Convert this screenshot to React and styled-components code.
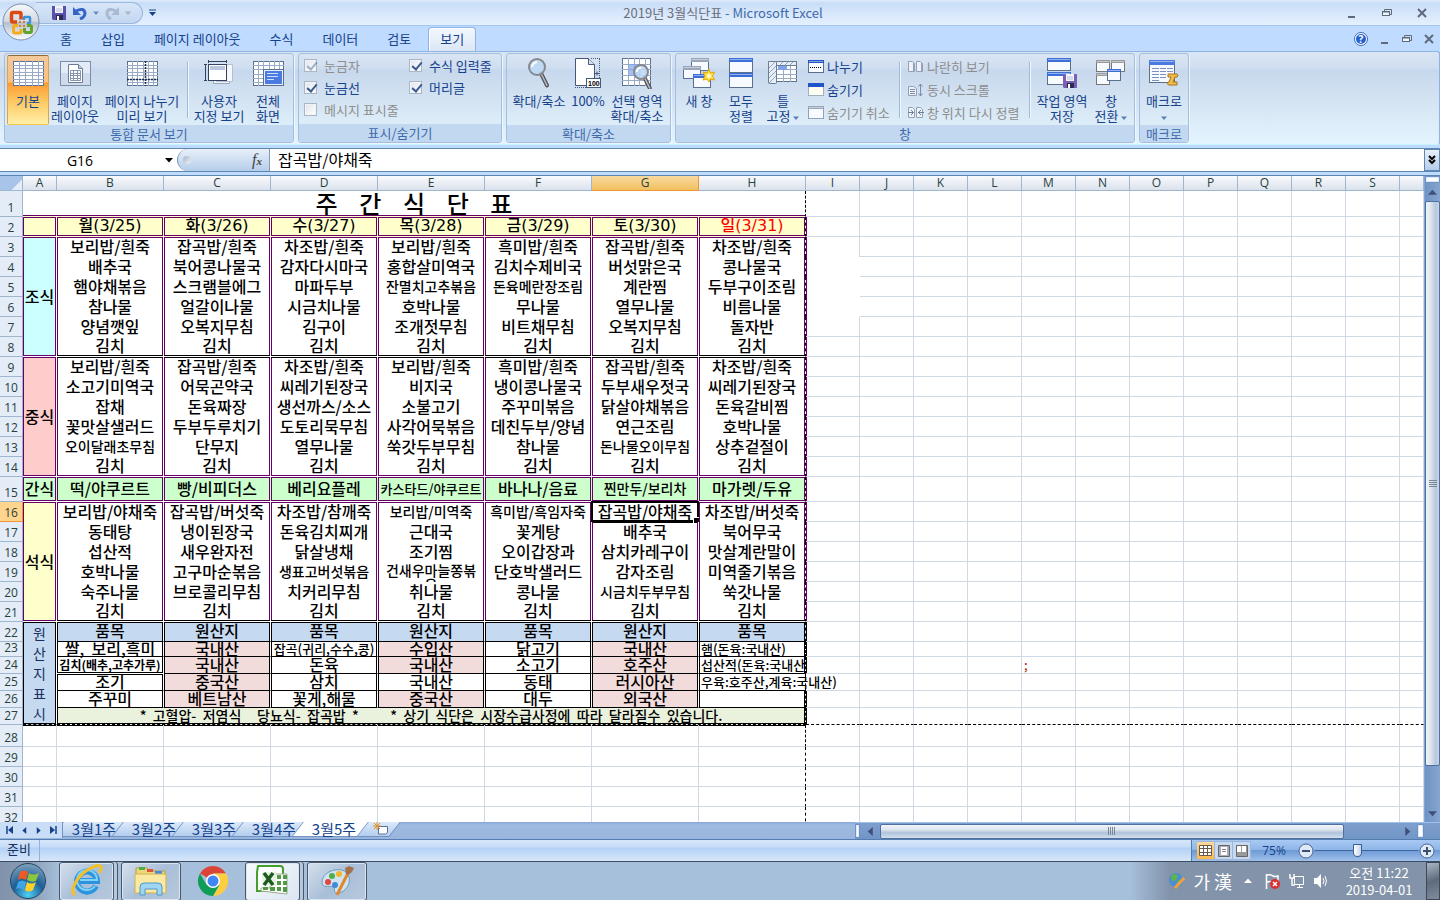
import { useState, } from 'react';
import styled, { createGlobalStyle, css, } from 'styled-components';

const GlobalStyle = createGlobalStyle`
  * { box-sizing: border-box; }
  body {
    margin: 0;
    overflow: hidden;
    color: #15428b;
    font-size: 13px;
    line-height: 15px;
    font-family: "Noto Sans CJK KR", sans-serif;
  }
  button, input {
    margin: 0;
    padding: 0;
    border: 0;
    color: inherit;
    font: inherit;
    background: none;
  }
`;

const PURPLE = '#660066';
const BLACK = '#000';
const GRID = '#d0d7e5';

const Window = styled.div`
  display: flex;
  flex-direction: column;
  height: 100vh;
  position: relative;
  background: #bfdbff;
`;

/* title bar */

const TitleBar = styled.header`
  display: flex;
  align-items: center;
  height: 26px;
  padding-left: 36px;
  border-bottom: 1px solid #a5c7f3;
  background: linear-gradient(#dfecfb 0, #c9ddf6 3px, #d3e4fa 10px, #e4f0fe 100%);
`;

const QuickBar = styled.div`
  display: flex;
  align-items: center;
  gap: 4px;
  width: 107px;
  height: 22px;
  padding-left: 15px;
  border: 1px solid #9bb8de;
  border-left: 0;
  border-radius: 0 11px 11px 0;
  background: linear-gradient(#d8e6f8, #c3d7f0);
`;

const IconButton = styled.button`
  display: flex;
  align-items: center;
  justify-content: center;
  width: ${p => p.$w || 14}px;
  height: ${p => p.$h || 16}px;
`;

const Title = styled.h1`
  flex: 1;
  margin: 0;
  padding-right: 62px;
  color: #6a6f7c;
  font-size: 13px;
  font-weight: 400;
  text-align: center;
  span { color: #3e6aaa; }
`;

const WindowButtons = styled.div`
  display: flex;
  align-items: center;
  gap: ${p => p.$gap}px;
  padding-right: ${p => p.$pad}px;
`;

const OfficeButton = styled.button`
  position: absolute;
  left: 2px;
  top: 3px;
  width: 38px;
  height: 38px;
`;

/* ribbon */

const TabRow = styled.nav`
  display: flex;
  align-items: flex-end;
  gap: 5px;
  height: 25px;
  padding-left: 48px;
`;

const RibbonTab = styled.button`
  height: 24px;
  padding: 0 11px 2px;
  border: 1px solid transparent;
  border-bottom: 0;
  border-radius: 4px 4px 0 0;
  ${p => p.$active && css`
    border-color: #8db2e3;
    background: linear-gradient(#f3f8fe, #dbe6f5);
    box-shadow: inset 1px 1px #fff;
  `}
`;

const Spacer = styled.div`
  flex: 1;
`;

const RibbonBody = styled.section`
  display: flex;
  gap: 4px;
  height: 94px;
  margin-bottom: 3px;
  padding: 1px 4px 2px;
  border: 1px solid #8db2e3;
  border-left: 0;
  border-bottom: 1px solid #c3f5fb;
  border-radius: 0 3px 3px 0;
  background: linear-gradient(#dbe6f4 0, #cfdef0 16px, #c7d8ed 18px, #d9e8f5 60px, #e3f4ff 100%);
`;

const Group = styled.div`
  display: flex;
  flex-direction: column;
  flex: none;
  width: ${p => p.$w}px;
  height: 90px;
  border: 1px solid #a3bfdd;
  border-radius: 3px;
  overflow: hidden;
  box-shadow: 1px 1px #eef6fd;
`;

const GroupBody = styled.div`
  display: flex;
  flex: 1;
  padding: ${p => p.$pad || '0 2px'};
`;

const GroupLabel = styled.div`
  height: 18px;
  color: #3e6aaa;
  line-height: 17px;
  text-align: center;
  background: #c2d8f0;
`;

const BigButton = styled.button`
  display: flex;
  flex-direction: column;
  align-items: center;
  flex: none;
  width: ${p => p.$w}px;
  height: 70px;
  margin-top: 1px;
  padding-top: 1px;
  white-space: nowrap;
  border-radius: 2px;
  border: 1px solid transparent;
  ${p => p.$active && css`
    border-color: #8e6c3a #d9a44a #f2c64a;
    background: linear-gradient(#f3c99b 0, #fdc07c 26px, #fd9a33 27px, #fdc861 45px, #fff0a8 100%);
  `}
`;

const IconSlot = styled.span`
  display: flex;
  align-items: center;
  justify-content: center;
  height: 36px;
  padding-bottom: 4px;
`;

const Divider = styled.div`
  flex: none;
  width: 2px;
  height: 56px;
  margin: 8px 4px 0;
  border-left: 1px solid #9fbbdc;
  border-right: 1px solid #eff6fd;
`;

const CheckGrid = styled.div`
  display: grid;
  grid-template-columns: 105px 90px;
  grid-template-rows: repeat(3, 22px);
  grid-auto-flow: column;
`;

const CheckLabel = styled.label`
  display: flex;
  align-items: center;
  gap: 7px;
  white-space: nowrap;
  color: ${p => p.$off ? '#8d8d8d' : '#15428b'};
`;

const CheckBox = styled.input`
  appearance: none;
  width: 13px;
  height: 13px;
  border: 1px solid #a9b6c8;
  background: linear-gradient(135deg, #dfe5ee, #fff);
  box-shadow: inset 0 0 0 1px #f4f4f4;
  &:checked::after {
    content: '';
    display: block;
    width: 4px;
    height: 8px;
    margin: 0 0 0 4px;
    border: solid #3b5b92;
    border-width: 0 2px 2px 0;
    transform: rotate(40deg);
  }
  &:disabled::after { opacity: 0.45; }
`;

const SmallList = styled.div`
  display: flex;
  flex-direction: column;
  flex: none;
  width: ${p => p.$w}px;
  padding: 1px 0 0 3px;
`;

const SmallButton = styled.button`
  display: flex;
  align-items: center;
  gap: 3px;
  height: 23px;
  white-space: nowrap;
  color: ${p => p.disabled ? '#8d8d8d' : '#15428b'};
`;

/* formula bar */

const FormulaBar = styled.div`
  display: flex;
  height: 24px;
  margin-bottom: 3px;
  border-top: 1px solid #5d86b0;
  border-bottom: 1px solid #5d86b0;
  background: #fff;
  color: #000;
`;

const NameBox = styled.input`
  width: 160px;
  text-align: center;
  font: 14px "Open Sans", sans-serif;
`;

const FxArea = styled.div`
  display: flex;
  align-items: center;
  justify-content: space-between;
  width: 93px;
  padding: 0 7px 0 5px;
  border: 1px solid #7f9db9;
  border-width: 0 1px 0 1px;
  border-radius: 11px 0 0 11px;
  background: linear-gradient(#e9f0fa, #b5cdea);
  color: #444;
  font: italic 16px "Liberation Serif", serif;
  sub {
    font-size: 11px;
    font-weight: bold;
    vertical-align: baseline;
  }
`;

const Knob = styled.span`
  width: 8px;
  height: 8px;
  border-radius: 50%;
  background: linear-gradient(135deg, #a7b3c4, #eef3fa);
`;

const FormulaInput = styled.input`
  flex: 1;
  padding: 0 0 2px 8px;
  font-size: 16px;
`;

const ExpandButton = styled(IconButton)`
  width: 16px;
  height: 22px;
  border: 1px solid #5d86b0;
  background: linear-gradient(#e9f0fa, #b5cdea);
`;

/* sheet */

const SheetArea = styled.main`
  display: flex;
  flex: 1;
  min-height: 0;
  border-top: 1px solid #5d86b0;
`;

const SheetView = styled.div`
  flex: 1;
  overflow: hidden;
  background: #fff;
`;

const Sheet = styled.table`
  width: 100%;
  table-layout: fixed;
  border-spacing: 0;
  color: #000;
`;

const ColHead = styled.th`
  height: 15px;
  padding: 0;
  border-right: 1px solid #9eb6ce;
  border-bottom: 1px solid #9eb6ce;
  background: linear-gradient(#f8fafc, #dbe2ec);
  color: #27413e;
  font: 12px/14px "Open Sans", sans-serif;
  ${p => p.$active && css`
    border-color: #f29536;
    background: linear-gradient(#f9d99f, #f1c15f);
  `}
`;

const Corner = styled(ColHead)`
  background: linear-gradient(135deg, #a9c4e9 70%, #e4ecf7 70%);
`;

const RowHead = styled.th`
  padding: 0;
  vertical-align: bottom;
  border-right: 1px solid #9eb6ce;
  border-bottom: 1px solid #9eb6ce;
  background: #e4ecf7;
  color: #27413e;
  font: 12px/15px "Open Sans", sans-serif;
  ${p => p.$active && css`
    border-color: #f29536;
    background: #ffd58d;
  `}
`;

const RowSize = styled.div`
  display: flex;
  align-items: flex-end;
  justify-content: center;
  height: ${p => p.$h - 1}px;
  padding-bottom: 1px;
`;

function edges({ $side, $left = $side, $top, $bottom }) {
  const list = [
    $top && `inset 0 1px ${$top}`,
    $bottom && `inset 0 -1px ${$bottom}`,
    $left && `inset 1px 0 ${$left}`,
    $side && `inset -1px 0 ${$side}`,
  ].filter(Boolean);
  return list.length ? list.join(', ') : 'none';
}

const Cell = styled.td`
  position: relative;
  padding: 0;
  text-align: center;
  font-size: ${p => p.$size || 16}px;
  font-weight: ${p => p.$weight || 500};
  line-height: 17px;
  background: ${p => p.$bg || 'transparent'};
  border-right: 1px ${p => p.$right || `solid ${GRID}`};
  border-bottom: 1px ${p => p.$under || `solid ${GRID}`};
  box-shadow: ${edges};
`;

const CellText = styled.div`
  display: flex;
  align-items: center;
  justify-content: ${p => p.$start ? 'flex-start' : 'center'};
  height: ${p => p.$h - 1}px;
  padding: ${p => p.$start ? '0 2px 2px' : '0 0 2px'};
  white-space: pre;
  ${p => p.$clip && css`
    overflow: hidden;
  `}
  ${p => p.$wrapped && css`
    align-items: flex-start;
    line-height: 14px;
    overflow: hidden;
  `}
`;

const DayCell = styled(Cell)`
  font-family: "DejaVu Sans", "Noto Sans CJK KR", sans-serif;
  color: ${p => p.$red ? '#f00' : '#000'};
`;

const SheetTitle = styled(Cell)`
  font-size: 24px;
  line-height: 24px;
`;

const StackedText = styled.span`
  display: block;
  color: #17305c;
  font-size: 14px;
  font-weight: 400;
  line-height: 20px;
`;

const Selection = styled.div`
  position: absolute;
  inset: 0;
  border: 1px solid #000;
  border-bottom: 2px solid #000;
  outline: 1px solid #000;
  pointer-events: none;
  &::after {
    content: '';
    position: absolute;
    right: -3px;
    bottom: -4px;
    width: 5px;
    height: 5px;
    border: 1px solid #fff;
    background: #000;
  }
`;

/* scroll bars */

const VScroll = styled.div`
  display: flex;
  flex-direction: column;
  width: 16px;
  border-left: 1px solid #7ea6d8;
  background: linear-gradient(90deg, #6f93c3, #86a5d0);
`;

const SplitBox = styled.div`
  width: ${p => p.$w || 15}px;
  height: ${p => p.$h || 7}px;
  border: 1px solid #6f93c3;
  background: #fff;
  box-shadow: inset 0 0 0 1px #dce8f8;
`;

const VThumb = styled.div`
  display: flex;
  align-items: center;
  justify-content: center;
  flex: 564;
  border: 1px solid #4f6f9f;
  border-radius: 2px;
  background: linear-gradient(90deg, #f1f4f8, #dfe6ee 35%, #b5c7de 75%, #c9d8e9);
`;

const HScroll = styled.div`
  display: flex;
  flex: 0 1 585px;
  align-items: center;
  border-top: 1px solid #9dc0ef;
  background: linear-gradient(#7f9fce, #7096c6);
`;

const HThumb = styled.div`
  display: flex;
  align-items: center;
  justify-content: center;
  flex: 464;
  height: 15px;
  border: 1px solid #4f6f9f;
  border-radius: 2px;
  background: linear-gradient(#f1f4f8, #dfe6ee 35%, #b0c3da 60%, #d3dfec);
`;

const Rest = styled.div`
  flex: ${p => p.$grow};
`;

/* sheet tabs */

const TabStrip = styled.div`
  display: flex;
  align-items: flex-start;
  height: 17px;
  background: linear-gradient(#86a8d9 0, #a0bbe0 3px, #9ab5dd 100%);
`;

const TabNav = styled.div`
  position: relative;
  z-index: 3;
  display: flex;
  align-items: center;
  width: 63px;
  height: 16px;
  padding-left: 2px;
  border-right: 1px solid #7393c2;
  background: #c9ddf6;
`;

const SheetTab = styled.button`
  position: relative;
  width: 60px;
  height: 15px;
  padding: 0 0 2px 2px;
  font-size: 15px;
  line-height: 13px;
  white-space: nowrap;
  z-index: ${p => p.$active ? 2 : 1};
  &::before {
    content: '';
    position: absolute;
    z-index: -1;
    inset: 0 0 0 -6px;
    border: 1px solid #7393c2;
    border-top: 0;
    background: ${p => p.$active ? '#fff' : 'linear-gradient(#dceafb, #b4cdee)'};
    transform: skewX(-38deg);
  }
`;

const NewSheet = styled(SheetTab)`
  width: 32px;
  padding-left: 4px;
`;

/* status bar */

const StatusBar = styled.footer`
  display: flex;
  align-items: stretch;
  height: 22px;
  border-top: 1px solid #567db1;
  background: linear-gradient(#d7e6f9 0, #c7dcf8 7px, #b3d0f5 8px, #cde1f9 17px, #d7e5f7 100%);
`;

const Ready = styled.span`
  width: 40px;
  padding: 1px 0 0 7px;
  font-size: 13px;
  color: #17305c;
  border-right: 1px solid #8fb2de;
`;

const StatusTools = styled.div`
  display: flex;
  align-items: center;
  width: 249px;
  padding: 0 4px 0 5px;
  border-left: 1px solid #567db1;
  background: linear-gradient(#a9c9f3, #8db5e8 48%, #6e9ad6 50%, #9fc0ea);
`;

const ViewButton = styled(IconButton)`
  width: 18px;
  height: 19px;
  border: 1px solid #9db6d6;
  border-left-width: 0;
  background: ${p => p.$active ? 'linear-gradient(#fbd9a0, #fdb84b)' : '#c5d9f1'};
`;

const ZoomText = styled.button`
  width: 46px;
  font: 12px "Open Sans", sans-serif;
`;

const ZoomSlider = styled.input`
  appearance: none;
  flex: 1;
  min-width: 0;
  height: 16px;
  background: linear-gradient(#3f679c, #3f679c) center / 100% 1px no-repeat;
  &::-webkit-slider-thumb {
    appearance: none;
    width: 9px;
    height: 13px;
    border: 1px solid #3f5f93;
    border-radius: 1px 1px 5px 5px;
    background: linear-gradient(90deg, #fff, #c5d5ea);
  }
`;

/* taskbar */

const Taskbar = styled.footer`
  display: flex;
  align-items: center;
  height: 39px;
  border-top: 1px solid #3b4c63;
  background: linear-gradient(90deg, #8093ab 0, #8b9db4 30px, #a6bfdb 60px, #a6bfdb calc(100% - 310px), #8293aa calc(100% - 270px), #8293aa 100%);
`;

const StartButton = styled(IconButton)`
  width: 55px;
  height: 38px;
`;

const TaskButton = styled.button`
  display: flex;
  align-items: center;
  justify-content: center;
  width: ${p => p.$w || 60}px;
  height: 39px;
  margin-left: 2px;
  border: 1px solid #47566b;
  border-radius: 3px;
  background: linear-gradient(135deg, #d5e0ec, #a9bfd8 50%, #b6c8dc);
  box-shadow: inset 0 0 0 1px #dbe6f1;
  ${p => p.$stacked && css`
    width: 55px;
    margin-left: 4px;
    margin-right: 5px;
    box-shadow: inset 0 0 0 1px #dbe6f1, 3px 0 #b6c8dc, 4px 0 #47566b;
  `}
  ${p => p.$active && css`
    margin-left: 2px;
    background: linear-gradient(135deg, #f8fafc, #dbe6f2);
  `}
  ${p => p.$plain && css`
    border-color: transparent;
    background: none;
    box-shadow: none;
  `}
`;

const Tray = styled.div`
  display: flex;
  align-items: center;
  gap: 8px;
  color: #fff;
`;

const Ime = styled.span`
  font-size: 18px;
`;

const Clock = styled.time`
  width: 78px;
  margin-left: 3px;
  font-size: 13px;
  line-height: 17px;
  text-align: center;
`;

const ShowDesktop = styled.button`
  width: 14px;
  height: 38px;
  border: 1px solid #3d4858;
  background: linear-gradient(160deg, #aab6c4, #5d6b7d 50%, #7f8c9c);
`;

/* icons */

function Arrow({ dir = 'down', color = '#15428b', size = 7 }) {
  const turn = { down: 0, left: 90, up: 180, right: 270 }[dir];
  return (
    <svg width={size} height={size} viewBox='0 0 8 8'>
      <path d='M0 2h8L4 6.5z' fill={color} transform={`rotate(${turn} 4 4)`} />
    </svg>
  );
}

const frame = { fill: '#fff', stroke: '#5b6f8f' };

function GridLines({ x = 0, y = 0, w = 31, h = 25, cols = 5, rows = 6 }) {
  const lines = [];
  for (let i = 1; i < cols; i += 1) lines.push(`M${x + Math.round(i * w / cols) + 0.5} ${y}v${h}`);
  for (let i = 1; i < rows; i += 1) lines.push(`M${x} ${y + Math.round(i * h / rows) + 0.5}h${w}`);
  return (
    <>
      <rect x={x + 0.5} y={y + 0.5} width={w - 1} height={h - 1} {...frame} />
      <path d={lines.join('')} stroke='#9aabc6' fill='none' />
    </>
  );
}

function Pane({ x, y, w, h, bar = '#3a6fd8', barH = 4, stroke = '#5b6f8f' }) {
  return (
    <g>
      <rect x={x + 0.5} y={y + 0.5} width={w - 1} height={h - 1} fill='#f7faff' stroke={stroke} />
      <rect x={x} y={y} width={w} height={barH} fill={bar} />
      <path d={`M${x + 1} ${y + 1.5}h${w - 2}`} stroke='#fff' opacity='0.45' />
    </g>
  );
}

function Lens({ x, y, r = 8 }) {
  return (
    <g>
      <path d={`M${x + r * 0.5} ${y + r * 0.8}l${r * 0.75} ${r * 1.5}`} stroke='#4f4f55' strokeWidth='4' strokeLinecap='round' />
      <path d={`M${x + r * 0.5} ${y + r * 0.8}l${r * 0.75} ${r * 1.5}`} stroke='#b9b9bf' strokeWidth='1.5' strokeLinecap='round' />
      <circle cx={x} cy={y} r={r} fill='#bcd8f5' fillOpacity='0.85' stroke='#85898f' strokeWidth='2' />
      <path d={`M${x - r * 0.6} ${y}a${r * 0.6} ${r * 0.6} 0 0 1 ${r * 0.6} -${r * 0.6}`} stroke='#fff' strokeWidth='2' fill='none' />
    </g>
  );
}

function Floppy({ x = 0, y = 0, fill = '#5a4fae' }) {
  return (
    <g transform={`translate(${x} ${y})`}>
      <path d='M0 0h14v14H1L0 13z' fill={fill} />
      <rect x='3' y='0' width='8' height='7' fill='#f3f4fb' />
      <path d='M4 3h6M4 5h6' stroke='#b8bfd8' />
      <rect x='4' y='9' width='7' height='5' fill='#2b2b52' />
      <rect x='5' y='10' width='2' height='4' fill='#fff' />
    </g>
  );
}

const icons = {
  normal: (
    <svg width='31' height='25'><GridLines cols={5} rows={7} /></svg>
  ),
  pageLayout: (
    <svg width='31' height='25'>
      <rect x='0.5' y='0.5' width='30' height='24' fill='#e3ebf6' stroke='#7c8da8' />
      <rect x='1' y='12' width='29' height='12' fill='#cfdbec' />
      <path d='M8.500 3.500h10l4 4v14h-14z' fill='#fff' stroke='#6b7c98' />
      <path d='M18.500 3.500v4h4' fill='#c8d3e6' stroke='#6b7c98' />
      <path d='M10.500 9.500h10v10h-10zM10 12.500h10M10 14.500h10M10 17.500h10M13.500 10v10M17.500 10v10' stroke='#8796b0' fill='none' />
    </svg>
  ),
  pageBreak: (
    <svg width='31' height='25'>
      <GridLines cols={6} rows={7} />
      <path d='M18.500 0v25M0 18.500h31' stroke='#1c2f50' strokeWidth='1.500' strokeDasharray='2 1' />
    </svg>
  ),
  customView: (
    <svg width='31' height='26'>
      <path d='M9.500 6.500h16v17h-16z' fill='#eef3fa' stroke='#9aa7bc' />
      <path d='M12.500 4.500h16v17h-16z' fill='#f6f8fc' stroke='#b4bfd0' />
      <rect x='4.500' y='4.500' width='18' height='16' fill='#fff' stroke='#33425e' />
      <rect x='6' y='6' width='15' height='4' fill='#b9c6de' />
      <path d='M1.500 4v17M0 4.500h3M0 20.500h3M5 1.500h17M4.500 0v3M22.500 0v3' stroke='#33425e' />
    </svg>
  ),
  fullScreen: (
    <svg width='31' height='25'>
      <GridLines cols={6} rows={6} />
      <rect x='10.500' y='8.500' width='20' height='16' fill='#e9f0fb' stroke='#5b6f8f' />
      <rect x='12' y='10' width='17' height='13' fill='#4b7be0' />
      <path d='M14 12.500h11M14 15.500h11M14 18.500h7' stroke='#cfe0ff' />
    </svg>
  ),
  zoom: (
    <svg width='22' height='32'><Lens x={9} y={10} r={8} /></svg>
  ),
  hundred: (
    <svg width='26' height='32'>
      <path d='M0.500 1.500h13l6 6v21h-19z' fill='#fff' stroke='#45597b' />
      <path d='M13.500 1.500v6h6' fill='#d5deec' stroke='#45597b' />
      <path d='M16 1.500h9M24.500 2v19M0 30.500h12' stroke='#45597b' strokeDasharray='1 1' fill='none' />
      <path d='M20 16.500h4M22 14.500v4' stroke='#45597b' />
      <rect x='11.500' y='21.500' width='14' height='9' fill='#fff' stroke='#45597b' />
      <text x='13' y='29' fontSize='7' fontWeight='700' fontFamily='Liberation Sans' fill='#000'>100</text>
    </svg>
  ),
  zoomSel: (
    <svg width='31' height='32'>
      <GridLines y={1} w={29} h={28} cols={5} rows={5} />
      <rect x='7' y='7' width='12' height='12' fill='#7fa4ec' opacity='0.7' />
      <Lens x={19} y={15} r={7} />
    </svg>
  ),
  newWindow: (
    <svg width='32' height='32'>
      <Pane x={8} y={1} w={18} h={13} bar='#9aa6ba' />
      <Pane x={0} y={9} w={18} h={13} bar='#9aa6ba' />
      <Pane x={10} y={17} w={18} h={14} />
      <path d='M26 12l1.500 4 4-1-2 4 2 4-4-1-1.500 3-2-3-4 1 2-4-2-4 4 1z' fill='#ffe24a' stroke='#e0a800' />
      <circle cx='26' cy='19' r='2' fill='#fffbe0' />
    </svg>
  ),
  arrange: (
    <svg width='24' height='30'>
      <Pane x={0} y={0} w={24} h={15} barH={4} />
      <Pane x={0} y={15} w={24} h={15} barH={4} />
    </svg>
  ),
  freeze: (
    <svg width='30' height='26'>
      <GridLines w={29} h={21} y={1} cols={4} rows={5} />
      <rect x='0.500' y='1.500' width='28' height='4' fill='#e8edf6' stroke='#6b7c98' />
      <rect x='0.500' y='1.500' width='8' height='22' rx='1' fill='#e8edf6' stroke='#6b7c98' />
      <path d='M1 8l6-6M1 13l7-7M1 18l7-7M1 23l7-7M12 5l3-3M17 5l3-3M22 5l3-3' stroke='#8fa4c8' />
      <rect x='10' y='6' width='9' height='4' fill='#7fa4ec' />
    </svg>
  ),
  split: (
    <svg width='16' height='13'>
      <Pane x={0} y={0} w={16} h={13} bar='#1f55c8' barH={3} />
      <path d='M2 7.500h12' stroke='#000' strokeDasharray='1 1' />
    </svg>
  ),
  hide: (
    <svg width='16' height='13'>
      <rect x='0.500' y='0.500' width='15' height='12' fill='#fffef2' stroke='#5b6f8f' strokeDasharray='1 1' />
      <rect width='16' height='4' fill='#1f55c8' />
    </svg>
  ),
  unhide: (
    <svg width='16' height='13'>
      <Pane x={0} y={0} w={16} h={13} bar='#9aa6ba' barH={3} stroke='#93a1b8' />
    </svg>
  ),
  sideBySide: (
    <svg width='16' height='13'>
      <path d='M0.500 1.500h4l2 2v8h-6zM8.500 1.500h4l2 2v8h-6z' fill='#eef2f8' stroke='#93a1b8' />
      <path d='M5.500 2v10M13.500 2v10' stroke='#93a1b8' />
    </svg>
  ),
  syncScroll: (
    <svg width='16' height='14'>
      <path d='M0.500 3.500h5l3 2v7h-8z' fill='#eef2f8' stroke='#93a1b8' />
      <path d='M2 6.500h5M2 8.500h5M2 10.500h5M12.500 1v12M10.500 3.500l2-2.500 2 2.500M10.500 10.500l2 2.500 2-2.500' stroke='#7f8da5' fill='none' />
    </svg>
  ),
  resetPos: (
    <svg width='16' height='13'>
      <path d='M0.500 1.500h4l2 2v8h-6zM8.500 1.500h4l2 2v8h-6z' fill='#eef2f8' stroke='#93a1b8' />
      <path d='M0 6.500h5M10 6.500h6M3 4l2.500 2.500L3 9M13 4l-2.500 2.500L13 9' stroke='#6f7d96' fill='none' />
    </svg>
  ),
  saveWorkspace: (
    <svg width='31' height='32'>
      <Pane x={0} y={1} w={24} h={13} />
      <Pane x={0} y={15} w={24} h={13} />
      <Floppy x={16} y={17} fill='#7a5fb5' />
    </svg>
  ),
  switchWindow: (
    <svg width='30' height='26'>
      <Pane x={0} y={0} w={14} h={12} bar='#9a9a9a' barH={3} stroke='#777' />
      <Pane x={15} y={0} w={14} h={12} bar='#9a9a9a' barH={3} stroke='#777' />
      <Pane x={0} y={13} w={14} h={12} bar='#9a9a9a' barH={3} stroke='#777' />
      <Pane x={11} y={9} w={14} h={12} barH={3} />
    </svg>
  ),
  macro: (
    <svg width='30' height='26'>
      <Pane x={0} y={0} w={26} h={23} barH={5} bar='#4a7ae0' />
      <path d='M3 8.500h7M3 11.500h7M3 14.500h7M3 17.500h7M3 20.500h7M11 8.500h6M11 11.500h6M11 14.500h6M11 17.500h6M18 8.500h6M18 11.500h6' stroke='#7d92b8' />
      <path d='M19 14h9q2 1 0 3h-2l-2 5h4v3h-8q-3-1-1-3h1l2-5h-3z' fill='#f0bd4c' stroke='#a8741a' />
    </svg>
  ),
};

function OfficeLogo() {
  return (
    <svg width='38' height='38'>
      <defs>
        <linearGradient id='orb' x1='0' y1='0' x2='0' y2='1'>
          <stop offset='0' stopColor='#f7f9fb' />
          <stop offset='0.480' stopColor='#d3dae4' />
          <stop offset='0.520' stopColor='#b4bfce' />
          <stop offset='1' stopColor='#fdfeff' />
        </linearGradient>
      </defs>
      <circle cx='19' cy='19' r='18' fill='url(#orb)' stroke='#7d8ea8' />
      <g fill='none'>
        <path d='M19 16.500V11q0-1.500-1.500-1.500H11Q9.500 9.500 9.500 11v6.500q0 1.500 1.500 1.500h4' stroke='#dc4a12' strokeWidth='3.500' />
        <path d='M22 17v-2q0-1 1-1h4q1 0 1 1v4q0 1-1 1h-2' stroke='#3d8fd8' strokeWidth='2.500' />
        <path d='M19 26v2.500q0 1.500-1.500 1.500H13q-1.500 0-1.500-1.500V24q0-1.500 1.500-1.500h3' stroke='#f5ac1c' strokeWidth='3' />
        <path d='M25 22.500h3q1.500 0 1.500 1.500v4q0 1.500-1.500 1.500h-4q-1.500 0-1.500-1.500v-3' stroke='#5fa52c' strokeWidth='3' />
      </g>
      <path d='M17 18h2v2h-2zM21 18h2v2h-2zM17 22h2v2h-2zM21 22h2v2h-2z' fill='#e07a1c' />
    </svg>
  );
}

function MinimizeIcon() {
  return <svg width='10' height='12'><path d='M1 10h7' stroke='#5f6b7d' strokeWidth='2' /></svg>;
}

function RestoreIcon() {
  return (
    <svg width='10' height='10'>
      <path d='M2.500 3V1.500h7v5H7' fill='none' stroke='#5f6b7d' />
      <rect x='0.500' y='3.500' width='7' height='4' fill='#eef4fc' stroke='#5f6b7d' />
      <path d='M0 4h8' stroke='#5f6b7d' />
    </svg>
  );
}

function CloseIcon() {
  return <svg width='10' height='10'><path d='M1 1l8 8M9 1L1 9' stroke='#5f6b7d' strokeWidth='2' /></svg>;
}

function WindowsLogo() {
  return (
    <svg width='38' height='38'>
      <defs>
        <radialGradient id='start' cx='0.500' cy='0.900' r='0.900'>
          <stop offset='0' stopColor='#4fd0f5' />
          <stop offset='0.500' stopColor='#1d5f96' />
          <stop offset='1' stopColor='#7fa2bd' />
        </radialGradient>
      </defs>
      <circle cx='19' cy='19' r='17.500' fill='url(#start)' stroke='#27445f' />
      <path d='M11 10q4-3 8 0l-2 8q-4-3-8 0z' fill='#ee5a24' />
      <path d='M20 11q4 3 10 0l-3 8q-4 2-9-1z' fill='#8cc63f' />
      <path d='M9 20q4-3 8 0l-2 8q-4-3-8-1z' fill='#3fa4e8' />
      <path d='M18 20q4 3 9 0l-3 8q-4 3-8 0z' fill='#ffd028' />
    </svg>
  );
}

function BrowserLogo() {
  return (
    <svg width='34' height='34'>
      <path d='M26 22a10 10 0 1 1 1-5H10' fill='none' stroke='#2c94dc' strokeWidth='6' />
      <path d='M25 22a10 10 0 1 1 2-6H10' fill='none' stroke='#7fd2f8' strokeWidth='2' />
      <path d='M5 31C-1 28 6 14 16 7c7-5 14-7 15-4 1 2-1 4-2 6' fill='none' stroke='#f3bf2a' strokeWidth='3' />
    </svg>
  );
}

function FolderLogo() {
  return (
    <svg width='34' height='32'>
      <path d='M2 3h11l2 3h16v20H2z' fill='#f0d878' stroke='#b99a3c' />
      <path d='M5 2h6v3H5z' fill='#4bb04b' />
      <path d='M13 4h6v3h-6z' fill='#e0523c' />
      <path d='M21 6h7v3h-7z' fill='#3f8ee0' />
      <path d='M1 9h31v19H1z' fill='#fae9a2' stroke='#cdb055' />
      <path d='M6 30v-8q0-4 4-4h14q4 0 4 4v8h-5v-6H11v6z' fill='#9fd4f3' stroke='#4e9ac8' />
    </svg>
  );
}

function ChromeLogo() {
  return (
    <svg width='32' height='32' viewBox='0 0 32 32'>
      <path d='M16 16L3 8.500A15 15 0 0 1 29 8.500H16z' fill='#db4437' />
      <path d='M16 16l13-7.500A15 15 0 0 1 16 31l6.500-11.500z' fill='#ffcd40' />
      <path d='M16 16l6.500 3.700L16 31A15 15 0 0 1 3 8.500l6.500 11.300z' fill='#0f9d58' />
      <path d='M16 8.500h13a15 15 0 0 1 1 5H16z' fill='#ffcd40' />
      <circle cx='16' cy='16' r='7' fill='#fff' />
      <circle cx='16' cy='16' r='5.500' fill='#4285f4' />
    </svg>
  );
}

function ExcelLogo() {
  return (
    <svg width='34' height='32'>
      <path d='M2 1h22q3 0 3 3v22H1V7z' fill='#fff' stroke='#43a02c' strokeWidth='2' />
      <path d='M14 9h17v20l-26-3v-3h9z' fill='#fff' stroke='#9aa88f' />
      <path d='M21 10h4v4h-4zM27 10h4v4h-4zM21 16h4v4h-4zM27 16h4v4h-4zM21 22h4v4h-4zM27 22h4v5h-4zM14 22h5v4h-5zM7 22h5v3H7z' fill='#4f9a43' />
      <path d='M6 7h14v14H6z' fill='#e7f3e2' />
      <path d='M8 8l9 12M17 8L8 20' stroke='#1d5a21' strokeWidth='3.500' />
    </svg>
  );
}

function PaintLogo() {
  return (
    <svg width='34' height='32'>
      <path d='M15 5c10-2 16 5 14 13-2 7-9 11-13 10-3-1 0-5-3-6-4-2-11 2-11-5C2 11 8 6 15 5z' fill='#cfe4f3' stroke='#6d9cbd' />
      <circle cx='8' cy='17' r='3' fill='#e0473c' />
      <circle cx='12' cy='11' r='3' fill='#4fae46' />
      <circle cx='19' cy='9' r='3' fill='#f4b52c' />
      <circle cx='15' cy='20' r='3' fill='#4289d8' />
      <path d='M17 30L28 8' stroke='#e0862c' strokeWidth='3' />
      <path d='M26 9l-1-6 4-2 5 2-2 4-4 3z' fill='#a4714c' />
    </svg>
  );
}

/* data */

const days = ['월(3/25)', '화(3/26)', '수(3/27)', '목(3/28)', '금(3/29)', '토(3/30)', '일(3/31)'];

// a [text, size] pair is a cell with a smaller font
const breakfast = [
  ['보리밥/흰죽', '잡곡밥/흰죽', '차조밥/흰죽', '보리밥/흰죽', '흑미밥/흰죽', '잡곡밥/흰죽', '차조밥/흰죽'],
  ['배추국', '북어콩나물국', '감자다시마국', '홍합살미역국', '김치수제비국', '버섯맑은국', '콩나물국'],
  ['햄야채볶음', '스크램블에그', '마파두부', ['잔멸치고추볶음', 14], ['돈육메란장조림', 14], '계란찜', '두부구이조림'],
  ['참나물', '얼갈이나물', '시금치나물', '호박나물', '무나물', '열무나물', '비름나물'],
  ['양념깻잎', '오복지무침', '김구이', '조개젓무침', '비트채무침', '오복지무침', '돌자반'],
  ['김치', '김치', '김치', '김치', '김치', '김치', '김치'],
];

const lunch = [
  ['보리밥/흰죽', '잡곡밥/흰죽', '차조밥/흰죽', '보리밥/흰죽', '흑미밥/흰죽', '잡곡밥/흰죽', '차조밥/흰죽'],
  ['소고기미역국', '어묵곤약국', '씨레기된장국', '비지국', '냉이콩나물국', '두부새우젓국', '씨레기된장국'],
  ['잡채', '돈육짜장', '생선까스/소스', '소불고기', '주꾸미볶음', '닭살야채볶음', '돈육갈비찜'],
  ['꽃맛살샐러드', '두부두루치기', '도토리묵무침', '사각어묵볶음', '데친두부/양념', '연근조림', '호박나물'],
  [['오이달래초무침', 14], '단무지', '열무나물', '쑥갓두부무침', '참나물', ['돈나물오이무침', 14], '상추겉절이'],
  ['김치', '김치', '김치', '김치', '김치', '김치', '김치'],
];

const snack = ['떡/야쿠르트', '빵/비피더스', '베리요플레', ['카스타드/야쿠르트', 13], '바나나/음료', ['찐만두/보리차', 14], '마가렛/두유'];

const dinner = [
  ['보리밥/야채죽', '잡곡밥/버섯죽', '차조밥/참깨죽', ['보리밥/미역죽', 14], ['흑미밥/흑임자죽', 14], '잡곡밥/야채죽', '차조밥/버섯죽'],
  ['동태탕', '냉이된장국', '돈육김치찌개', '근대국', '꽃게탕', '배추국', '북어무국'],
  ['섭산적', '새우완자전', '닭살냉채', '조기찜', '오이갑장과', '삼치카레구이', '맛살계란말이'],
  ['호박나물', '고구마순볶음', ['생표고버섯볶음', 14], ['건새우마늘쫑볶\n음', 14], '단호박샐러드', '감자조림', '미역줄기볶음'],
  ['숙주나물', '브로콜리무침', '치커리무침', '취나물', '콩나물', ['시금치두부무침', 14], '쑥갓나물'],
  ['김치', '김치', '김치', '김치', '김치', '김치', '김치'],
];

const origins = [
  { no: 23, h: 15, cells: ['쌀,  보리,흑미', '국내산', ['잡곡(귀리,수수,콩)', 13], '수입산', '닭고기', '국내산', '햄(돈육:국내산)'] },
  { no: 24, h: 17, cells: [['김치(배추,고추가루)', 12], '국내산', '돈육', '국내산', '소고기', '호주산', '섭산적(돈육:국내산)'] },
  { no: 25, h: 17, cells: ['조기', '중국산', '삼치', '국내산', '동태', '러시아산', '우육:호주산,계육:국내산)'] },
  { no: 26, h: 17, cells: ['주꾸미', '베트남산', '꽃게,해물', '중국산', '대두', '외국산', ''] },
];

const pinkCells = { 1: [23, 24, 25, 26], 3: [23, 24, 26], 5: [23, 24, 25, 26] };

const sideColumns = 'IJKLMNOPQRS'.split('').concat('');

const Mark = styled(CellText)`
  color: #a03020;
`;

function SideCells({ no }) {
  const inTable = no > 1 && no < 28;
  return sideColumns.map((name, i) => {
    const hidden = i === 0 && no >= 4 && no <= 6;
    let under = `solid ${GRID}`;
    if (i === 0 && no >= 3 && no <= 6) under = 'none';
    if (no === 27) under = 'dashed #000';
    let left;
    if (i === 0 && inTable && no !== 25) left = no < 22 ? PURPLE : BLACK;
    return (
      <Cell
        key={name}
        $left={left}
        $right={hidden ? 'solid transparent' : undefined}
        $under={under}
        $size={12}
      >
        {no === 24 && name === 'M' && <Mark $h={17} $start>;</Mark>}
      </Cell>
    );
  });
}

function Row({ no, h, children }) {
  return (
    <tr>
      <RowHead scope='row' $active={no === 16}>
        <RowSize $h={h}>{no}</RowSize>
      </RowHead>
      {children}
      <SideCells no={no} />
    </tr>
  );
}

function Meal({ start, rows, title, color, black }) {
  const last = rows.length - 1;
  return rows.map((cells, r) => (
    <Row key={start + r} no={start + r} h={20}>
      {r === 0 && (
        <Cell rowSpan={6} $bg={color} $side={PURPLE} $top={PURPLE} $bottom={PURPLE} $right='solid #fff' $under='solid #fff'>
          {title}
        </Cell>
      )}
      {cells.map((cell, c) => {
        const [text, size] = Array.isArray(cell) ? cell : [cell];
        return (
          <Cell
            key={c}
            $size={size}
            $side={PURPLE}
            $top={r === 0 ? (black === 'top' ? BLACK : PURPLE) : undefined}
            $bottom={r === last ? (black === 'bottom' || start === 16 ? BLACK : PURPLE) : undefined}
            $right={c === 6 ? 'dashed #000' : 'solid #fff'}
            $under={r === last ? 'solid #fff' : 'none'}
          >
            <CellText $h={20} $wrapped={text.includes('\n')}>{text}</CellText>
            {start + r === 16 && c === 5 && <Selection />}
          </Cell>
        );
      })}
    </Row>
  ));
}

function Spreadsheet() {
  return (
    <Sheet>
      <colgroup>
        <col style={{ width: 23 }} />
        <col style={{ width: 34 }} />
        {days.map(d => <col key={d} style={{ width: 107 }} />)}
        {sideColumns.slice(0, -1).map(c => <col key={c} style={{ width: 54 }} />)}
        <col />
      </colgroup>
      <thead>
        <tr>
          <Corner />
          {'ABCDEFGH'.split('').concat(sideColumns).map(c => (
            <ColHead key={c} $active={c === 'G'}>{c}</ColHead>
          ))}
        </tr>
      </thead>
      <tbody>
        <Row no={1} h={26}>
          <SheetTitle colSpan={8} $bottom={PURPLE} $right='dashed #000' $under='solid #ffc'>
            <CellText $h={26}>주    간    식    단    표</CellText>
          </SheetTitle>
        </Row>
        <Row no={2} h={20}>
          <Cell $bg='#ffc' $side={PURPLE} $top={PURPLE} $bottom={PURPLE} $right='solid #ffc' $under='solid #ffc' />
          {days.map((d, i) => (
            <DayCell
              key={d}
              $bg='#ffc'
              $red={i === 6}
              $side={PURPLE}
              $top={PURPLE}
              $bottom={PURPLE}
              $right={i === 6 ? 'dashed #000' : 'solid #ffc'}
              $under='solid #ffc'
            >
              <CellText $h={20}>{d}</CellText>
            </DayCell>
          ))}
        </Row>
        <Meal start={3} rows={breakfast} title='조식' color='#cff' black='bottom' />
        <Meal start={9} rows={lunch} title='중식' color='#fcc' black='top' />
        <Row no={15} h={25}>
          {['간식', ...snack].map((cell, i) => {
            const [text, size] = Array.isArray(cell) ? cell : [cell];
            return (
              <Cell
                key={text}
                $bg='#cfc'
                $size={size}
                $side={PURPLE}
                $top={PURPLE}
                $bottom={PURPLE}
                $right={i === 7 ? 'dashed #000' : 'solid #cfc'}
                $under='solid #fff'
              >
                <CellText $h={25}>{text}</CellText>
              </Cell>
            );
          })}
        </Row>
        <Meal start={16} rows={dinner} title='석식' color='#ffc' />
        <Row no={22} h={20}>
          <Cell rowSpan={6} $bg='#c5d9f1' $side={BLACK} $top={BLACK} $bottom={BLACK} $right='solid #fff' $under='dashed #000'>
            {'원산지표시'.split('').map(ch => <StackedText key={ch}>{ch}</StackedText>)}
          </Cell>
          {days.map((d, i) => (
            <Cell
              key={d}
              $bg='#c5d9f1'
              $side={BLACK}
              $top={BLACK}
              $right={i === 6 ? 'dashed #000' : 'solid #fff'}
              $under='solid #000'
            >
              <CellText $h={20}>{i % 2 ? '원산지' : '품목'}</CellText>
            </Cell>
          ))}
        </Row>
        {origins.map(({ no, h, cells }) => (
          <Row key={no} no={no} h={h}>
            {cells.map((cell, i) => {
              const [text, size] = Array.isArray(cell) ? cell : [cell];
              const pink = pinkCells[i] && pinkCells[i].includes(no);
              const doubled = i === 0 && no === 24;
              return (
                <Cell
                  key={i}
                  $bg={pink ? '#f2dcdb' : undefined}
                  $size={i === 6 ? 13 : size}
                  $weight={size === 12 ? 700 : 500}
                  $side={i === 6 && no === 25 ? undefined : BLACK}
                  $left={BLACK}
                  $top={i === 0 && no === 25 ? BLACK : undefined}
                  $bottom={doubled ? BLACK : undefined}
                  $right={i === 6 ? 'dashed #000' : 'solid #fff'}
                  $under={doubled ? 'solid #fff' : 'solid #000'}
                >
                  <CellText $h={h} $start={i === 6} $clip={i === 6 && no === 24}>{text}</CellText>
                </Cell>
              );
            })}
          </Row>
        ))}
        <Row no={27} h={17}>
          <Cell colSpan={7} $bg='#eaf1dd' $size={14} $side={BLACK} $bottom={BLACK} $right='dashed #000' $under='dashed #000'>
            <CellText $h={17}>
              {'*  고혈압-  저염식     당뇨식-  잡곡밥  *          *  상기  식단은  시장수급사정에  따라  달라질수  있습니다.'}
            </CellText>
          </Cell>
        </Row>
        {[28, 29, 30, 31, 32].map(no => (
          <Row key={no} no={no} h={no === 28 ? 22 : 20}>
            {'ABCDEFGH'.split('').map(c => (
              <Cell key={c} $top={no === 28 ? BLACK : undefined} $right={c === 'H' ? 'dashed #000' : undefined} />
            ))}
          </Row>
        ))}
      </tbody>
    </Sheet>
  );
}

function Big({ w, icon, lines, active, menu }) {
  return (
    <BigButton $w={w} $active={active}>
      <IconSlot>{icons[icon]}</IconSlot>
      {lines.map((line, i) => (
        <span key={i}>
          {line}
          {menu && i === lines.length - 1 && <> <Arrow color='#5b7fb5' size={6} /></>}
        </span>
      ))}
    </BigButton>
  );
}

function Check({ label, checked, disabled }) {
  const [on, setOn] = useState(checked);
  return (
    <CheckLabel $off={disabled}>
      <CheckBox type='checkbox' checked={on} disabled={disabled} onChange={() => setOn(!on)} />
      {label}
    </CheckLabel>
  );
}

function Ribbon() {
  return (
    <RibbonBody>
      <Group $w={290}>
        <GroupBody>
          <Big w={42} icon='normal' lines={['기본']} active />
          <Big w={52} icon='pageLayout' lines={['페이지', '레이아웃']} />
          <Big w={82} icon='pageBreak' lines={['페이지 나누기', '미리 보기']} />
          <Divider />
          <Big w={52} icon='customView' lines={['사용자', '지정 보기']} />
          <Big w={46} icon='fullScreen' lines={['전체', '화면']} />
        </GroupBody>
        <GroupLabel>통합 문서 보기</GroupLabel>
      </Group>
      <Group $w={204}>
        <GroupBody $pad='0 5px'>
          <CheckGrid>
            <Check label='눈금자' checked disabled />
            <Check label='눈금선' checked />
            <Check label='메시지 표시줄' checked={false} disabled />
            <Check label='수식 입력줄' checked />
            <Check label='머리글' checked />
          </CheckGrid>
        </GroupBody>
        <GroupLabel>표시/숨기기</GroupLabel>
      </Group>
      <Group $w={165}>
        <GroupBody $pad='0 1px'>
          <Big w={62} icon='zoom' lines={['확대/축소']} />
          <Big w={36} icon='hundred' lines={['100%']} />
          <Big w={62} icon='zoomSel' lines={['선택 영역', '확대/축소']} />
        </GroupBody>
        <GroupLabel>확대/축소</GroupLabel>
      </Group>
      <Group $w={460}>
        <GroupBody $pad='0 1px'>
          <Big w={44} icon='newWindow' lines={['새 창']} />
          <Big w={40} icon='arrange' lines={['모두', '정렬']} />
          <Big w={44} icon='freeze' lines={['틀', '고정']} menu />
          <SmallList $w={90}>
            <SmallButton>{icons.split}나누기</SmallButton>
            <SmallButton>{icons.hide}숨기기</SmallButton>
            <SmallButton disabled>{icons.unhide}숨기기 취소</SmallButton>
          </SmallList>
          <Divider />
          <SmallList $w={120}>
            <SmallButton disabled>{icons.sideBySide}나란히 보기</SmallButton>
            <SmallButton disabled>{icons.syncScroll}동시 스크롤</SmallButton>
            <SmallButton disabled>{icons.resetPos}창 위치 다시 정렬</SmallButton>
          </SmallList>
          <Divider />
          <Big w={54} icon='saveWorkspace' lines={['작업 영역', '저장']} />
          <Big w={44} icon='switchWindow' lines={['창', '전환']} menu />
        </GroupBody>
        <GroupLabel>창</GroupLabel>
      </Group>
      <Group $w={50}>
        <GroupBody $pad='0 1px'>
          <Big w={46} icon='macro' lines={['매크로', '']} menu />
        </GroupBody>
        <GroupLabel>매크로</GroupLabel>
      </Group>
    </RibbonBody>
  );
}

function TitleRow() {
  return (
    <TitleBar>
      <QuickBar>
        <IconButton aria-label='저장' $w={16}><svg width='14' height='14'><Floppy /></svg></IconButton>
        <IconButton aria-label='실행 취소' $w={18}>
          <svg width='16' height='14'>
            <path d='M4 5q8-4 9 2 0 4-5 6' fill='none' stroke='#3465c4' strokeWidth='3' />
            <path d='M1 1v8h8z' fill='#3465c4' />
          </svg>
        </IconButton>
        <Arrow color='#6a8cc0' size={6} />
        <IconButton aria-label='다시 실행' $w={18}>
          <svg width='16' height='14'>
            <path d='M12 5q-8-4-9 2 0 4 4 6' fill='none' stroke='#a9b9d2' strokeWidth='3' />
            <path d='M15 1v8H7z' fill='#a9b9d2' />
          </svg>
        </IconButton>
        <Arrow color='#a9b3c4' size={6} />
      </QuickBar>
      <IconButton aria-label='빠른 실행 도구 모음 사용자 지정' $w={18}>
        <svg width='7' height='8'><path d='M0 1h7' stroke='#15428b' /><path d='M0 3h7L3.500 7z' fill='#15428b' /></svg>
      </IconButton>
      <Title>2019년 3월식단표 <span>- Microsoft Excel</span></Title>
      <WindowButtons $gap={25} $pad={13}>
        <IconButton $w={10} aria-label='최소화'><MinimizeIcon /></IconButton>
        <IconButton $w={10} aria-label='이전 크기로'><RestoreIcon /></IconButton>
        <IconButton $w={10} aria-label='닫기'><CloseIcon /></IconButton>
      </WindowButtons>
    </TitleBar>
  );
}

const ribbonTabs = ['홈', '삽입', '페이지 레이아웃', '수식', '데이터', '검토', '보기'];
const sheetTabs = ['3월1주', '3월2주', '3월3주', '3월4주', '3월5주'];

export default function App() {
  const [zoom, setZoom] = useState(75);

  return (
    <Window>
      <GlobalStyle />
      <TitleRow />
      <TabRow>
        {ribbonTabs.map(t => <RibbonTab key={t} $active={t === '보기'}>{t}</RibbonTab>)}
        <Spacer />
        <WindowButtons $gap={12} $pad={6}>
          <IconButton aria-label='도움말' $h={24}>
            <svg width='14' height='14'>
              <circle cx='7' cy='7' r='6.500' fill='#fff' stroke='#3a68b8' />
              <circle cx='7' cy='7' r='5' fill='#2560d0' />
              <text x='7' y='11' textAnchor='middle' fontSize='10' fontWeight='700' fill='#fff' fontFamily='Open Sans'>?</text>
            </svg>
          </IconButton>
          <IconButton $w={10} aria-label='통합 문서 최소화'><MinimizeIcon /></IconButton>
          <IconButton $w={10} aria-label='통합 문서 이전 크기로'><RestoreIcon /></IconButton>
          <IconButton $w={10} aria-label='통합 문서 닫기'><CloseIcon /></IconButton>
        </WindowButtons>
      </TabRow>
      <Ribbon />
      <OfficeButton aria-label='Office 단추'><OfficeLogo /></OfficeButton>

      <FormulaBar>
        <NameBox aria-label='이름 상자' defaultValue='G16' />
        <IconButton $w={17} $h={22} aria-label='이름 목록'><Arrow color='#000' size={8} /></IconButton>
        <FxArea><Knob /><span>f<sub>x</sub></span></FxArea>
        <FormulaInput aria-label='수식 입력줄' defaultValue='잡곡밥/야채죽' />
        <ExpandButton aria-label='수식 입력줄 확장'>
          <svg width='8' height='10'><path d='M1 1l3 3 3-3M1 5l3 3 3-3' fill='none' stroke='#000' strokeWidth='2' /></svg>
        </ExpandButton>
      </FormulaBar>

      <SheetArea>
        <SheetView><Spreadsheet /></SheetView>
        <VScroll>
          <SplitBox />
          <IconButton $w={15} $h={18} aria-label='위로'><Arrow dir='up' color='#3f4f78' size={9} /></IconButton>
          <VThumb><svg width='8' height='8'><path d='M0 0.500h8M0 2.500h8M0 4.500h8M0 6.500h8' stroke='#7d8896' /></svg></VThumb>
          <Rest $grow={39} />
          <IconButton $w={15} $h={17} aria-label='아래로'><Arrow color='#3f4f78' size={9} /></IconButton>
        </VScroll>
      </SheetArea>

      <TabStrip>
        <TabNav>
          <IconButton $w={15} aria-label='첫 시트'><svg width='8' height='8'><path d='M1 0v8' stroke='#15428b' strokeWidth='1.500' /><path d='M7 0v8L2 4z' fill='#15428b' /></svg></IconButton>
          <IconButton $w={14} aria-label='이전 시트'><Arrow dir='left' /></IconButton>
          <IconButton $w={14} aria-label='다음 시트'><Arrow dir='right' /></IconButton>
          <IconButton $w={15} aria-label='마지막 시트'><svg width='8' height='8'><path d='M7 0v8' stroke='#15428b' strokeWidth='1.500' /><path d='M1 0v8l5-4z' fill='#15428b' /></svg></IconButton>
        </TabNav>
        {sheetTabs.map((t, i) => <SheetTab key={t} $active={i === 4}>{t}</SheetTab>)}
        <NewSheet aria-label='워크시트 삽입'>
          <svg width='16' height='13'>
            <path d='M5.500 4.500h9v6l-2 1.500h-7z' fill='#fff' stroke='#5b6f9f' />
            <path d='M4 0v8M0 4h8M1 1l6 6M7 1L1 7' stroke='#e09020' />
          </svg>
        </NewSheet>
        <Spacer />
        <HScroll>
          <SplitBox $w={5} $h={14} />
          <IconButton $w={20} $h={15} aria-label='왼쪽으로'><Arrow dir='left' color='#3f4f78' size={9} /></IconButton>
          <HThumb><svg width='8' height='8'><path d='M0.500 0v8M2.500 0v8M4.500 0v8M6.500 0v8' stroke='#7d8896' /></svg></HThumb>
          <Rest $grow={53} />
          <IconButton $w={20} $h={15} aria-label='오른쪽으로'><Arrow dir='right' color='#3f4f78' size={9} /></IconButton>
          <SplitBox $w={7} $h={14} />
          <IconButton $w={16} as='span' />
        </HScroll>
      </TabStrip>

      <StatusBar>
        <Ready>준비</Ready>
        <Spacer />
        <StatusTools>
          <ViewButton $active aria-label='기본 보기'><svg width='13' height='11'><path d='M0.500 0.500h12v10h-12zM0 3.500h13M0 7.500h13M4.500 0v11M8.500 0v11' fill='#fff' stroke='#6b5a4a' /></svg></ViewButton>
          <ViewButton aria-label='페이지 레이아웃 보기'><svg width='12' height='12'><path d='M0.500 0.500h11v11h-11z' fill='#aab' stroke='#666' /><path d='M3 2h6v8H3z' fill='#fff' /><path d='M4 4.500h4M4 6.500h4' stroke='#888' /></svg></ViewButton>
          <ViewButton aria-label='페이지 나누기 보기'><svg width='12' height='12'><path d='M0.500 0.500h11v11h-11z' fill='#999' stroke='#666' /><path d='M1 1h4v6H1zM6 1h4v6H6z' fill='#fff' /></svg></ViewButton>
          <ZoomText>{zoom}%</ZoomText>
          <IconButton $w={18} aria-label='축소'>
            <svg width='16' height='16'><circle cx='8' cy='8' r='7' fill='#dfeaf8' stroke='#4a6594' /><path d='M4 8h8' stroke='#3f4f6f' strokeWidth='2' /></svg>
          </IconButton>
          <ZoomSlider
            type='range'
            min={10}
            max={170}
            aria-label='확대/축소'
            value={zoom}
            onChange={e => setZoom(Number(e.target.value))}
          />
          <IconButton $w={18} aria-label='확대'>
            <svg width='16' height='16'><circle cx='8' cy='8' r='7' fill='#dfeaf8' stroke='#4a6594' /><path d='M4 8h8M8 4v8' stroke='#3f4f6f' strokeWidth='2' /></svg>
          </IconButton>
        </StatusTools>
      </StatusBar>

      <Taskbar>
        <StartButton aria-label='시작'><WindowsLogo /></StartButton>
        <TaskButton $stacked aria-label='Internet Explorer'><BrowserLogo /></TaskButton>
        <TaskButton aria-label='탐색기'><FolderLogo /></TaskButton>
        <TaskButton $plain aria-label='Chrome'><ChromeLogo /></TaskButton>
        <TaskButton $stacked $active aria-label='Excel'><ExcelLogo /></TaskButton>
        <TaskButton aria-label='그림판'><PaintLogo /></TaskButton>
        <Spacer />
        <Tray>
          <svg width='16' height='18'>
            <circle cx='7' cy='8' r='7' fill='#4a90d0' />
            <path d='M2 4q4-4 7 0l-2 4-4 1zM8 9l5-2q0 5-4 7z' fill='#5fb54a' />
            <path d='M6 16l9-10' stroke='#f0a040' strokeWidth='3' />
          </svg>
          <Ime>가 漢</Ime>
          <IconButton $w={16} aria-label='숨겨진 아이콘 표시'><Arrow dir='up' color='#fff' size={8} /></IconButton>
          <svg width='17' height='17'>
            <path d='M2.500 1v15M3 2q4-1 6 1 2 1 5 0v7q-4 1-6-1-2-1-5 0' fill='none' stroke='#fff' strokeWidth='1.500' />
            <circle cx='11' cy='11' r='5' fill='#dc3030' />
            <path d='M9 9l4 4M13 9l-4 4' stroke='#fff' strokeWidth='1.500' />
          </svg>
          <svg width='16' height='16'>
            <path d='M5.500 3.500h9v8h-9zM8 14.500h6M10.500 12v2' fill='none' stroke='#fff' />
            <path d='M1 1v4h4V1M3 5v7h3' fill='none' stroke='#fff' strokeWidth='1.500' />
          </svg>
          <svg width='16' height='16'>
            <path d='M1 5h3l4-4v14l-4-4H1z' fill='#fff' />
            <path d='M10 5q2 3 0 6M12 3q3 5 0 10' fill='none' stroke='#fff' />
          </svg>
          <Clock>오전 11:22<br />2019-04-01</Clock>
          <ShowDesktop aria-label='바탕 화면 보기' />
        </Tray>
      </Taskbar>
    </Window>
  );
}
